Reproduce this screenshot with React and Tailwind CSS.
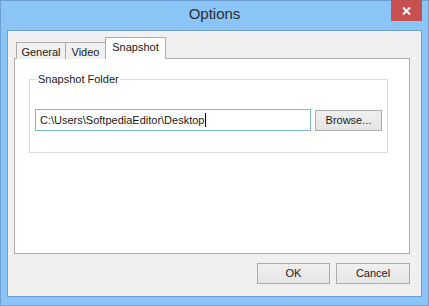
export default function App() {
  const font = { fontFamily: '"Liberation Sans", Arial, sans-serif' };
  const tabs = [
    { id: 'general', label: 'General', w: 'w-[50px]' },
    { id: 'video', label: 'Video', w: 'w-[41px]' },
    { id: 'snapshot', label: 'Snapshot', w: 'w-[61px]' },
  ];
  const active = 'snapshot';

  return (
    <div
      className="w-[429px] h-[306px] bg-[#8bc4f6] border border-[#6d9fd2] flex flex-col text-[11px] text-[#1a1a1a]"
      style={font}
    >
      {/* Title bar */}
      <div className="relative h-[29px] shrink-0 flex items-center justify-center">
        <span className="text-[15px] text-[#2b2b2b] -mt-[2px]">Options</span>
        <div className="absolute right-[6px] -top-px w-[31px] h-[21px] bg-[#c75050] flex items-center justify-center">
          <svg width="9" height="8" viewBox="0 0 9 8">
            <path d="M1 0.5 L8 7.5 M8 0.5 L1 7.5" stroke="#fff" strokeWidth="2" />
          </svg>
        </div>
      </div>

      {/* Client area */}
      <div className="ml-[6px] w-[415px] h-[267px] border border-[#6f9fd0] bg-[#f0f0f0] flex flex-col pl-[6px] pr-[11px] pt-[7px]">
        {/* Tabs */}
        <div className="flex items-end h-[21px] pl-[2px] -mb-px relative z-10">
          {tabs.map((tab) =>
            tab.id === active ? (
              <div
                key={tab.id}
                className={`${tab.w} h-[22px] bg-white border border-[#adadad] border-b-0 -ml-px flex items-center justify-center pb-[2px]`}
              >
                {tab.label}
              </div>
            ) : (
              <div
                key={tab.id}
                className={`${tab.w} h-[17px] bg-[#f0f0f0] border border-[#adadad] border-b-0 -ml-px first:ml-0 flex items-center justify-center pt-[2px]`}
              >
                {tab.label}
              </div>
            )
          )}
        </div>

        {/* Tab pane */}
        <div className="h-[196px] bg-white border border-[#adadad] pl-[14px] pr-[23px] pt-[14px]">
          <fieldset className="border border-[#dcdcdc] px-[5px] pb-[21px] pt-[23px]">
            <legend className="ml-[2px] px-[1px] leading-[13px]">Snapshot Folder</legend>
            <div className="flex items-center gap-[4px]">
              <div className="w-[276px] h-[22px] border border-[#7eb4ea] bg-white flex items-center pl-[4px]">
                <span>C:\Users\SoftpediaEditor\Desktop</span>
                <span className="w-px h-[14px] bg-black ml-px" />
              </div>
              <button className="w-[67px] h-[21px] border border-[#acacac] bg-gradient-to-b from-[#f0f0f0] to-[#e5e5e5] text-[11px] text-[#1a1a1a]">
                Browse...
              </button>
            </div>
          </fieldset>
        </div>

        {/* Footer buttons */}
        <div className="flex justify-end gap-[6px] pt-[9px]">
          <button className="w-[73px] h-[21px] border border-[#acacac] bg-gradient-to-b from-[#f0f0f0] to-[#e5e5e5] text-[11px] text-[#1a1a1a]">
            OK
          </button>
          <button className="w-[74px] h-[21px] border border-[#acacac] bg-gradient-to-b from-[#f0f0f0] to-[#e5e5e5] text-[11px] text-[#1a1a1a]">
            Cancel
          </button>
        </div>
      </div>
    </div>
  );
}
